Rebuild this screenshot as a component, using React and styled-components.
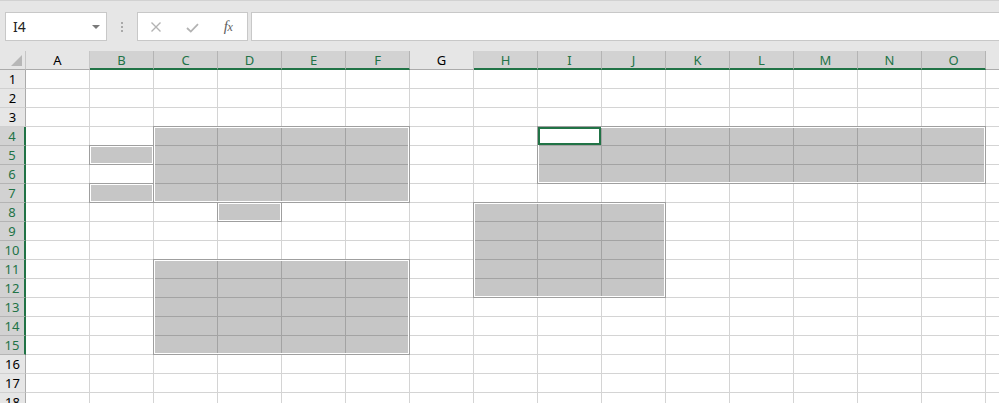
import styled, { createGlobalStyle } from 'styled-components';

const GlobalStyle = createGlobalStyle`
  html, body {
    margin: 0;
    padding: 0;
    background: #fff;
    overflow: hidden;
  }
  body {
    width: 999px;
    height: 403px;
    font-family: "Noto Sans", "Open Sans", sans-serif;
  }
`;

const GREEN = '#217346';
const COL_W = 64;
const ROW_H = 19;
const HEAD_W = 26;
const HEAD_H = 19;

const LETTERS = ['A', 'B', 'C', 'D', 'E', 'F', 'G', 'H', 'I', 'J', 'K', 'L', 'M', 'N', 'O', ''];
const ROWS = 18;

// c0..c1 columns (A = 0), r0..r1 rows (1-based)
const ranges = [
  { c0: 2, c1: 5, r0: 4, r1: 7 },
  { c0: 1, c1: 1, r0: 5, r1: 5 },
  { c0: 1, c1: 1, r0: 7, r1: 7 },
  { c0: 3, c1: 3, r0: 8, r1: 8 },
  { c0: 2, c1: 5, r0: 11, r1: 15 },
  { c0: 7, c1: 9, r0: 8, r1: 12 },
  { c0: 8, c1: 14, r0: 4, r1: 6 },
];
const active = { c: 8, r: 4 };

const inRange = (c, r) => ranges.some(g => c >= g.c0 && c <= g.c1 && r >= g.r0 && r <= g.r1);
const colSelected = c => ranges.some(g => c >= g.c0 && c <= g.c1);
const rowSelected = r => ranges.some(g => r >= g.r0 && r <= g.r1);

const Page = styled.div`
  width: 999px;
  height: 403px;
  overflow: hidden;
  background: #fff;
`;

const Toolbar = styled.div`
  box-sizing: border-box;
  height: 51px;
  display: flex;
  align-items: flex-start;
  padding: 11px 0 0 5px;
  background: #e6e6e6;
  border-top: 1px solid #d2d2d2;
`;

const NameBox = styled.div`
  box-sizing: border-box;
  width: 102px;
  height: 29px;
  display: flex;
  align-items: center;
  padding: 0 6px 0 7px;
  background: #fff;
  border: 1px solid #c8c8c8;
  font-size: 14px;
  color: #222;
`;

const DropArrow = styled.span`
  margin-left: auto;
  width: 0;
  height: 0;
  border-left: 4px solid transparent;
  border-right: 4px solid transparent;
  border-top: 4px solid #7a7a7a;
`;

const Grip = styled.div`
  width: 30px;
  height: 29px;
  display: flex;
  flex-direction: column;
  align-items: center;
  justify-content: center;
  gap: 2px;
`;

const Dot = styled.span`
  width: 2px;
  height: 2px;
  background: #a9a9a9;
`;

const FxBox = styled.div`
  box-sizing: border-box;
  width: 111px;
  height: 29px;
  display: flex;
  align-items: center;
  background: #fff;
  border: 1px solid #c8c8c8;
`;

const FxSlot = styled.div`
  width: 36px;
  height: 100%;
  display: flex;
  align-items: center;
  justify-content: center;
  padding-top: ${p => p.$down || 0}px;
  box-sizing: border-box;
`;

const FxText = styled.span`
  font-family: "Liberation Serif", "DejaVu Serif", serif;
  font-style: italic;
  font-size: 15px;
  color: #5e5e5e;
  letter-spacing: -0.5px;
  & small {
    font-size: 12px;
  }
`;

const FormulaInput = styled.div`
  box-sizing: border-box;
  flex: 1;
  height: 29px;
  margin-left: 3px;
  background: #fff;
  border: 1px solid #c8c8c8;
  border-right: none;
`;

const Sheet = styled.div`
  position: relative;
`;

const Line = styled.div`
  display: flex;
  height: ${p => p.$h}px;
`;

const Corner = styled.div`
  box-sizing: border-box;
  flex: 0 0 ${HEAD_W}px;
  display: flex;
  align-items: flex-end;
  justify-content: flex-end;
  padding: 0 3px 3px 0;
  background: #e6e6e6;
  border-right: 1px solid #c6c6c6;
  border-bottom: 1px solid #ababab;
`;

const CornerMark = styled.span`
  width: 0;
  height: 0;
  border-left: 11px solid transparent;
  border-bottom: 11px solid #b7b7b7;
`;

const ColHead = styled.div`
  box-sizing: border-box;
  flex: 0 0 ${COL_W}px;
  display: flex;
  align-items: center;
  justify-content: center;
  font-size: 13px;
  background: ${p => (p.$sel ? '#d2d2d2' : '#e6e6e6')};
  color: ${p => (p.$sel ? GREEN : '#000')};
  border-right: 1px solid ${p => (p.$sel ? '#b4b4b4' : '#c6c6c6')};
  border-bottom: ${p => (p.$sel ? `2px solid ${GREEN}` : '1px solid #ababab')};
`;

const RowHead = styled.div`
  box-sizing: border-box;
  flex: 0 0 ${HEAD_W}px;
  display: flex;
  align-items: center;
  justify-content: center;
  font-size: 13px;
  background: ${p => (p.$sel ? '#d2d2d2' : '#e6e6e6')};
  color: ${p => (p.$sel ? GREEN : '#000')};
  border-right: ${p => (p.$sel ? `2px solid ${GREEN}` : '1px solid #ababab')};
  border-bottom: 1px solid ${p => (p.$sel ? '#b4b4b4' : '#d0d0d0')};
`;

const Cell = styled.div`
  box-sizing: border-box;
  flex: 0 0 ${COL_W}px;
  background: ${p => (p.$sel && !p.$active ? '#c6c6c6' : '#fff')};
  border-right: 1px solid ${p => (p.$sel ? '#a3a3a3' : '#d4d4d4')};
  border-bottom: 1px solid ${p => (p.$sel ? '#a3a3a3' : '#d4d4d4')};
`;

const RangeOutline = styled.div`
  position: absolute;
  box-sizing: border-box;
  border: 1px solid #9f9f9f;
  box-shadow: inset 0 0 0 1px #fff;
  pointer-events: none;
`;

const ActiveMark = styled.div`
  position: absolute;
  box-sizing: border-box;
  width: ${COL_W - 1}px;
  height: ${ROW_H - 1}px;
  border: 2px solid ${GREEN};
  pointer-events: none;
`;

function CrossIcon() {
  return (
    <svg width="12" height="12" viewBox="0 0 12 12">
      <path d="M1.5 1.5 L10.5 10.5 M10.5 1.5 L1.5 10.5" stroke="#b3b3b3" strokeWidth="1.4" fill="none" />
    </svg>
  );
}

function CheckIcon() {
  return (
    <svg width="13" height="10" viewBox="0 0 13 10">
      <path d="M1 5 L4.8 8.6 L12 1.2" stroke="#b3b3b3" strokeWidth="1.8" fill="none" />
    </svg>
  );
}

function FormulaBar() {
  return (
    <Toolbar>
      <NameBox>
        I4
        <DropArrow />
      </NameBox>
      <Grip>
        <Dot />
        <Dot />
        <Dot />
      </Grip>
      <FxBox>
        <FxSlot><CrossIcon /></FxSlot>
        <FxSlot $down={2}><CheckIcon /></FxSlot>
        <FxSlot><FxText>f<small>x</small></FxText></FxSlot>
      </FxBox>
      <FormulaInput />
    </Toolbar>
  );
}

function Grid() {
  const rows = [];
  for (let r = 1; r <= ROWS; r++) {
    rows.push(
      <Line key={r} $h={ROW_H}>
        <RowHead $sel={rowSelected(r)}>{r}</RowHead>
        {LETTERS.map((l, c) => (
          <Cell
            key={c}
            $sel={inRange(c, r)}
            $active={active.c === c && active.r === r}
          />
        ))}
      </Line>
    );
  }

  return (
    <Sheet>
      <Line $h={HEAD_H}>
        <Corner><CornerMark /></Corner>
        {LETTERS.map((l, c) => (
          <ColHead key={c} $sel={l !== '' && colSelected(c)}>{l}</ColHead>
        ))}
      </Line>
      {rows}
      {ranges.map((g, i) => (
        <RangeOutline
          key={i}
          style={{
            left: HEAD_W - 1 + COL_W * g.c0,
            top: HEAD_H - 1 + ROW_H * (g.r0 - 1),
            width: COL_W * (g.c1 - g.c0 + 1) + 1,
            height: ROW_H * (g.r1 - g.r0 + 1) + 1,
          }}
        />
      ))}
      <ActiveMark
        style={{
          left: HEAD_W + COL_W * active.c,
          top: HEAD_H + ROW_H * (active.r - 1),
        }}
      />
    </Sheet>
  );
}

export default function App() {
  return (
    <Page>
      <GlobalStyle />
      <FormulaBar />
      <Grid />
    </Page>
  );
}
